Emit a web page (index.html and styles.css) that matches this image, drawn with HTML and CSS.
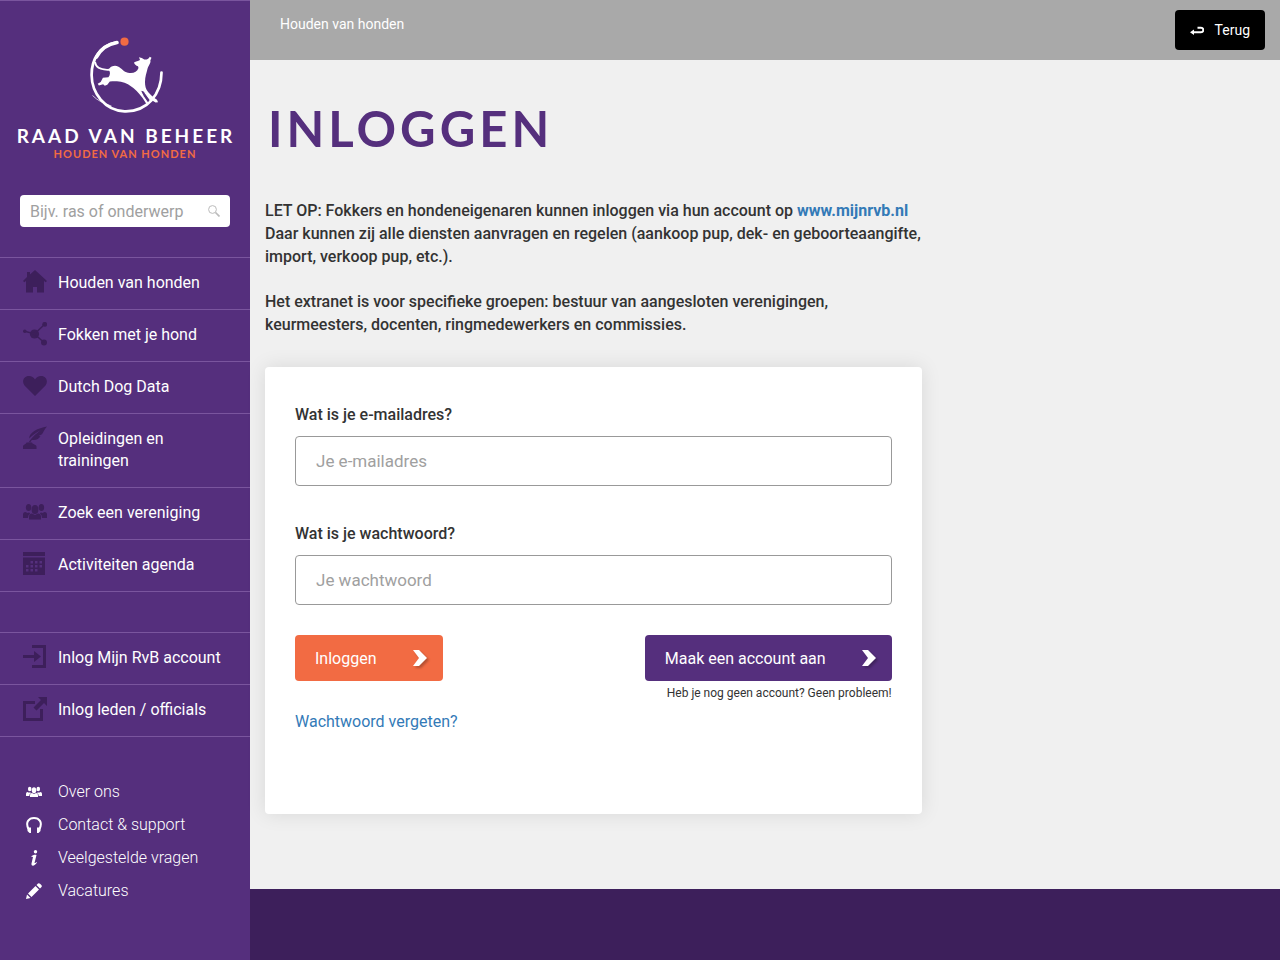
FILE: index.html
```html
<!DOCTYPE html>
<html lang="nl">
<head>
<meta charset="utf-8">
<meta name="viewport" content="width=device-width, initial-scale=1">
<title>Inloggen - Raad van Beheer</title>
<link rel="stylesheet" href="styles.css">
</head>
<body>
<svg class="sprite" aria-hidden="true">
  <symbol id="people" viewBox="0 0 24 24">
    <ellipse cx="12" cy="9.500" rx="3.400" ry="4.500"/><ellipse cx="5.6" cy="7.500" rx="2.700" ry="3.500"/><ellipse cx="18.400" cy="7.500" rx="2.700" ry="3.500"/>
    <path d="M6 19.500v-2.500q0-3.500 3-3.500l3 1.500 3-1.500q3 0 3 3.500v2.500zM0 18v-3.500q0-2.500 2.500-2.500l2 1 1.500-.6q1 .3 1 1.300-2 1-2 4.300zM24 18v-3.500q0-2.500-2.500-2.500l-2 1-1.500-.6q-1 .3-1 1.300 2 1 2 4.300z"/>
  </symbol>
</svg>
<div class="layout">
  <aside class="sidebar">
    <a class="logo" href="#" aria-label="Raad van Beheer, Houden van honden">
      <svg class="logo-mark" viewBox="0 0 91 90" aria-hidden="true">
        <path d="M36.500 12.300C20 15.500 11.500 29 11.600 45c.2 18 13 35.500 33 36.300C67 82 81.500 64 81.500 42.500" fill="none" stroke="#fff" stroke-width="2.700" stroke-linecap="round"/>
        <path d="M37 12.500C28 14 20.500 19.500 16.500 27" fill="none" stroke="#fff" stroke-width="3.600" stroke-linecap="round"/>
        <path d="M15 32c1 7 9 8.500 17 7.500" fill="none" stroke="#fff" stroke-width="1.800"/>
        <path d="M12.500 65.500q7 7 19 10.500" fill="none" stroke="#fff" stroke-width=".7"/>
        <path d="M29 39c2-3 6-4 9-2.500 4 2 5.500 5.300 10 6.300 5 1 9-.5 10.500-4.800l-.5-1.800c-2-.5-3.700-2-4-3.700 2-1 4-1.300 6-2.500l-1-2.700 2.800.6 2.500 1.700c1.500 0 3-.2 4.700-1.700l.7-1.200 1.800 1-1.200 2.700c1 2-2 5.500-2.800 8.300-1 4.500-2.500 8-2.500 13 0 4 .5 7 3.300 10.500 2.500 3 5 5 8.700 7.500l1 2.500-2.500.2-4-2.500-3 3.500-2.700-.5-3-4.700c-4-5-8-9.700-13-12.700-6-4-11-4.500-20-4l-2.500 3.200-2.500 1-1.700-1.500-4.200 1.200-1.200-1.700 3-1.800 2.200-4.200 5.500-.4c2-2 2-5.500.6-7z" fill="#fff"/>
        <path d="M60.500 61c2-1 4-.5 4.800 2l5 7-2.300 3.300-4.700-6.800z" fill="#552f7d" stroke="#fff" stroke-width="1.200"/>
        <circle cx="44.500" cy="11.700" r="4.100" fill="#f26b43"/>
      </svg>
      <span class="logo-name">RAAD VAN BEHEER</span>
      <span class="logo-tagline">HOUDEN VAN HONDEN</span>
    </a>
    <form class="search" role="search">
      <input type="search" aria-label="Zoeken" placeholder="Bijv. ras of onderwerp">
      <button type="button" aria-label="Zoek"><svg viewBox="0 0 12 12" fill="none" stroke="#bbb"><circle cx="4.500" cy="4.500" r="3.900"/><path d="M7.500 7.500 11.500 11.500" stroke-width="1.700"/></svg></button>
    </form>
    <nav class="menu">
      <a href="#"><svg viewBox="0 0 24 24"><path d="M12 0 24 11l-1.300 1.200L21 11v11.500h-7V17h-4v5.500H3V11l-1.700 1.200L0 11 4 7V2h3v2.500z"/></svg>Houden van honden</a>
      <a href="#"><svg viewBox="0 0 24 24"><circle cx="11.500" cy="12" r="4.600"/><circle cx="21.700" cy="2.300" r="2.400"/><circle cx="21" cy="20.500" r="3"/><circle cx="1.800" cy="9.300" r="1.800"/><path d="m1.800 9.300 9.700 2.700L21.700 2.300M11.500 12 21 20.500" fill="none" stroke="#3d1f5b" stroke-width="1.500"/></svg>Fokken met je hond</a>
      <a href="#"><svg viewBox="0 0 24 24"><path d="M12 22 1.500 11.500C-1.500 7.500.5 2 6 2q4 0 6 3.500Q14 2 18 2c5.500 0 7.500 5.500 4.500 9.500z"/></svg>Dutch Dog Data</a>
      <a href="#"><svg viewBox="0 0 24 24"><path d="M24 .5C15 2 6 6.500 6.200 12.500L8 10.700C12 7.500 15 5.500 18 4 12 8.500 9 11.500 5.500 16.500l1.300.5 2-3c5 .5 7-1.500 8.700-3.800l-2-.2 3.500-1.700c1.500-2 2.500-5.500 5-7.800zM0 23v-2.500c0-2 3-2 3.500-4h5.500c.5 2 4.500 2 4.500 4V23z"/></svg>Opleidingen en trainingen</a>
      <a href="#"><svg><use href="#people"/></svg>Zoek een vereniging</a>
      <a href="#"><svg viewBox="0 0 24 24"><path fill-rule="evenodd" d="M0 0h22v4H0zM0 5.500h22V23H0zM7.500 9v2.500H10V9zm4.500 0v2.500h2.500V9zm4.500 0v2.500H19V9zM3 13v2.500h2.500V13zm4.500 0v2.500H10V13zm4.500 0v2.500h2.500V13zm4.500 0v2.500H19V13zM3 17v2.500h2.500V17zm4.500 0v2.500H10V17zm4.500 0v2.500h2.500V17z"/></svg>Activiteiten agenda</a>
    </nav>
    <nav class="menu">
      <a href="#"><svg viewBox="0 0 24 24"><path d="M9 0h14v23H9v-3h11V3H9zM0 10h11V6l7 5.500-7 5.500v-4H0z"/></svg>Inlog Mijn RvB account</a>
      <a href="#"><svg viewBox="0 0 24 24"><path d="M0 4h12v3H3v14h14v-9h3v12H0zM15 0h9v9l-3-3-7.500 7.500-3-3L18 3z"/></svg>Inlog leden / officials</a>
    </nav>
    <nav class="submenu">
      <a href="#"><svg><use href="#people"/></svg>Over ons</a>
      <a href="#"><svg viewBox="0 0 16 16"><path d="M2.500 12C-1 5 3 1 8 1s9 4 5.500 11" fill="none" stroke="#fff" stroke-width="2"/><path d="M1.500 10.500H5V16H3.500L1.500 14zM14.500 10.500H11V16h1.500l2-2z"/></svg>Contact &amp; support</a>
      <a href="#"><svg viewBox="0 0 16 16"><circle cx="9.500" cy="1.800" r="1.700"/><path d="M5 6.500C7 4.800 9 4.500 10.500 5L8.500 13q1.200.3 2.200-1l.3.600C9 16 5 17 5.500 13.500L7 7z"/></svg>Veelgestelde vragen</a>
      <a href="#"><svg viewBox="0 0 16 16"><path d="m0 16 1-4.500L4.500 15zM2 10.500l7.500-7.500 3.500 3.500L5.500 14zM10.500 2 12 .5q1-.7 2 .2l1.300 1.300q.9 1 .2 2L14 5.500z"/></svg>Vacatures</a>
    </nav>
  </aside>
  <div class="page">
    <header class="topbar">
      <a class="crumb" href="#">Houden van honden</a>
      <a class="back" href="#"><svg viewBox="0 0 14 9" aria-hidden="true"><path d="M2.500 6.300H11a2.300 2.300 0 0 0 0-4.600H7.500" fill="none" stroke="#fff" stroke-width="1.900"/><path d="M0 6.200 4 3.400V9z" fill="#fff"/></svg>Terug</a>
    </header>
    <main class="content">
      <h1>INLOGGEN</h1>
      <div class="intro">
        <p>LET OP: Fokkers en hondeneigenaren kunnen inloggen via hun account op <a href="#">www.mijnrvb.nl</a><br>Daar kunnen zij alle diensten aanvragen en regelen (aankoop pup, dek- en geboorteaangifte, import, verkoop pup, etc.).</p>
        <p>Het extranet is voor specifieke groepen: bestuur van aangesloten verenigingen, keurmeesters, docenten, ringmedewerkers en commissies.</p>
      </div>
      <form class="card">
        <div class="field">
          <label for="email">Wat is je e-mailadres?</label>
          <input id="email" type="email" placeholder="Je e-mailadres">
        </div>
        <div class="field">
          <label for="password">Wat is je wachtwoord?</label>
          <input id="password" type="password" placeholder="Je wachtwoord">
        </div>
        <div class="actions">
          <button class="button button-login" type="button">Inloggen<svg viewBox="0 0 14 16" aria-hidden="true"><path d="M0 0h6l8 8-8 8H0l6-8z"/></svg></button>
          <div class="register">
            <button class="button button-register" type="button">Maak een account aan<svg viewBox="0 0 14 16" aria-hidden="true"><path d="M0 0h6l8 8-8 8H0l6-8z"/></svg></button>
            <small>Heb je nog geen account? Geen probleem!</small>
          </div>
        </div>
        <a class="forgot" href="#">Wachtwoord vergeten?</a>
      </form>
    </main>
    <footer class="footer"></footer>
  </div>
</div>
</body>
</html>
```
FILE: styles.css
```css
* { box-sizing: border-box; }
body {
  margin: 0;
  background: #f0f0f0;
  color: #333;
  font: 16px/23px Roboto, "Open Sans", sans-serif;
}
a { text-decoration: none; color: #337ab7; }
input, button { font: inherit; }
.sprite { display: none; }
.layout { display: flex; min-height: 100vh; }

.sidebar {
  flex: 0 0 250px;
  min-width: 0;
  background: #552f7d;
  border-top: 1px solid #7a559e;
}
.logo { display: flex; flex-direction: column; align-items: center; color: #fff; padding-top: 29px; white-space: nowrap; }
.logo-mark { width: 91px; height: 90px; overflow: visible; }
.logo-name { font: 700 19px/24px Lato, sans-serif; letter-spacing: 3px; margin-top: 4px; margin-right: -2px; }
.logo-tagline { font: 700 11px/12px Lato, sans-serif; letter-spacing: 1px; color: #f26b43; }
.search {
  display: flex;
  align-items: center;
  height: 32px;
  margin: 35px 20px 30px;
  padding: 0 10px;
  background: #fff;
  border-radius: 4px;
}
.search input { flex: 1; min-width: 0; padding: 0; border: 0; outline: 0; background: none; }
.search button { display: flex; padding: 0; border: 0; background: none; }
.search svg { width: 12px; height: 12px; }
::placeholder { color: #a0a0a0; opacity: 1; }

.menu { border-bottom: 1px solid #7a559e; margin-bottom: 40px; line-height: 22px; }
.menu a {
  display: flex;
  align-items: flex-start;
  gap: 11px;
  padding: 14px 15px 15px 23px;
  border-top: 1px solid #7a559e;
  color: #fff;
}
.menu svg { flex: none; width: 24px; height: 24px; margin: -2px 0 0; fill: #3d1f5b; }
.submenu { margin-top: -1px; }
.submenu a {
  display: flex;
  align-items: center;
  gap: 16px;
  padding: 4px 15px 6px 26px;
  color: #fff;
  font-weight: 300;
}
.submenu svg { flex: none; width: 16px; height: 16px; fill: #fff; }

.page { flex: 1; min-width: 0; display: flex; flex-direction: column; }
.topbar {
  display: flex;
  justify-content: space-between;
  height: 60px;
  padding: 10px 15px 10px 30px;
  background: #a9a9a9;
  font-size: 14px;
}
.topbar a { color: #fff; }
.crumb { padding-top: 3px; }
.back { display: flex; align-items: center; gap: 11px; padding: 0 15px; background: #000; border-radius: 4px; }
.back svg { width: 14px; height: 9px; }

.content { width: 66.667%; padding: 38px 15px 75px; }
h1 { margin: 0; padding-left: 3px; color: #552f7d; font: 700 49px/60px Lato, sans-serif; letter-spacing: 4px; }
.intro { margin: 41px 0 31px; font-weight: 500; }
.intro a { font-weight: 700; }
.intro p { margin: 0 0 22px; }

.card {
  padding: 36px 30px 81px;
  background: #fff;
  border-radius: 4px;
  box-shadow: 0 0 20px rgba(0, 0, 0, .1);
}
.field { margin-bottom: 36px; }
.field label { display: block; margin-bottom: 10px; font-weight: 500; }
.field input {
  display: block;
  width: 100%;
  height: 50px;
  padding: 0 20px;
  border: 1px solid #999;
  border-radius: 4px;
  background: #fff;
  font-size: 17px;
}
.actions { display: flex; justify-content: space-between; align-items: flex-start; margin-top: -6px; }
.button {
  display: flex;
  align-items: center;
  justify-content: space-between;
  gap: 36px;
  height: 46px;
  padding: 0 16px 0 20px;
  border: 0;
  border-radius: 4px;
  color: #fff;
}
.button svg { width: 14px; height: 16px; fill: #fff; filter: drop-shadow(2px 2px 1px rgba(0, 0, 0, .25)); }
.button-login { background: #f26b43; }
.button-register { background: #552f7d; }
.register { display: flex; flex-direction: column; align-items: flex-end; }
.register small { font-size: 12px; line-height: 24px; }
.forgot { display: inline-block; margin-top: 5px; }
.footer { flex: 1; background: #3d1f5b; }
```
